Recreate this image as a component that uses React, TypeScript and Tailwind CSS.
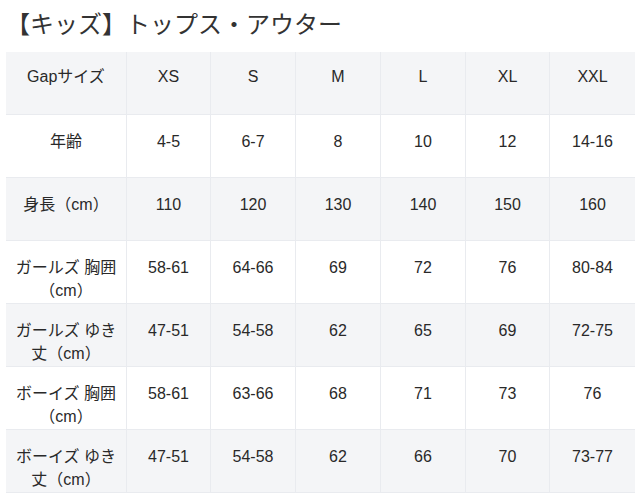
import React from "react";

const cols = ["XS", "S", "M", "L", "XL", "XXL"];
const rows: { label: React.ReactNode; values: string[] }[] = [
  { label: "年齢", values: ["4-5", "6-7", "8", "10", "12", "14-16"] },
  { label: "身長（cm）", values: ["110", "120", "130", "140", "150", "160"] },
  {
    label: (
      <>
        ガールズ 胸囲
        <br />
        （cm）
      </>
    ),
    values: ["58-61", "64-66", "69", "72", "76", "80-84"],
  },
  {
    label: (
      <>
        ガールズ ゆき
        <br />
        丈（cm）
      </>
    ),
    values: ["47-51", "54-58", "62", "65", "69", "72-75"],
  },
  {
    label: (
      <>
        ボーイズ 胸囲
        <br />
        （cm）
      </>
    ),
    values: ["58-61", "63-66", "68", "71", "73", "76"],
  },
  {
    label: (
      <>
        ボーイズ ゆき
        <br />
        丈（cm）
      </>
    ),
    values: ["47-51", "54-58", "62", "66", "70", "73-77"],
  },
];

const widths = ["w-[120px]", "w-[84px]", "w-[85px]", "w-[85px]", "w-[85px]", "w-[84px]", "w-[86px]"];

export default function App() {
  return (
    <div
      className="w-[640px] h-[501px] bg-white text-[#292929] overflow-hidden"
      style={{ fontFamily: '"Liberation Sans", "Noto Sans CJK JP", sans-serif' }}
    >
      <div className="pl-[6px] pt-[7px] pb-[9px] text-[24px] leading-[36px] text-[#333333]">
        【キッズ】トップス・アウター
      </div>
      <div className="ml-[6px] w-[629px] flex flex-col">
        <div className="flex h-[63px] bg-[#f4f5f7] border-b border-[#e9ebef]">
          <div className={`${widths[0]} shrink-0 text-center text-[16px] leading-[23px] pt-[13px]`}>Gapサイズ</div>
          {cols.map((c, i) => (
            <div
              key={c}
              className={`${widths[i + 1]} shrink-0 border-l border-[#e9ebef] text-center text-[16px] leading-[23px] pt-[13px]`}
            >
              {c}
            </div>
          ))}
        </div>
        {rows.map((r, ri) => (
          <div
            key={ri}
            className={`flex h-[63px] border-b border-[#e9ebef] ${ri % 2 === 1 ? "bg-[#f4f5f7]" : "bg-white"}`}
          >
            <div className={`${widths[0]} shrink-0 text-center text-[16px] leading-[23px] pt-[15px] whitespace-nowrap`}>
              {r.label}
            </div>
            {r.values.map((v, i) => (
              <div
                key={i}
                className={`${widths[i + 1]} shrink-0 border-l border-[#e9ebef] text-center text-[16px] leading-[23px] pt-[15px]`}
              >
                {v}
              </div>
            ))}
          </div>
        ))}
      </div>
    </div>
  );
}
